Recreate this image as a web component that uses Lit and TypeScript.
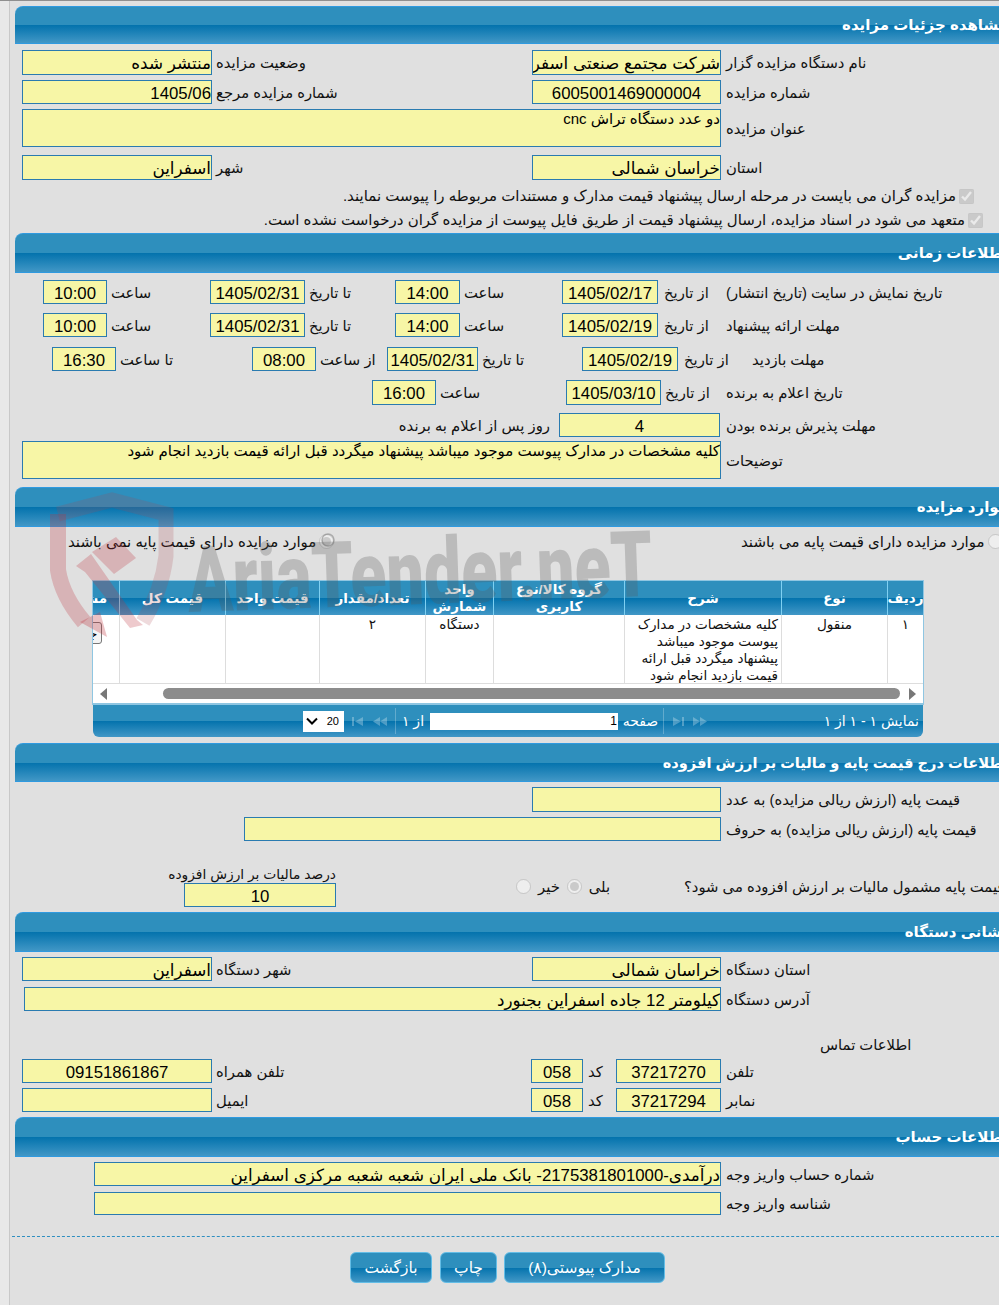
import { LitElement, html, css, svg } from "lit";
import { customElement } from "lit/decorators.js";

const f = (text: string, cls = "") => html`<div class="f ${cls}"><span>${text}</span></div>`;
const l = (text: string, cls = "") => html`<div class="l ${cls}"><span>${text}</span></div>`;

const head = ["ردیف", "نوع", "شرح", "گروه کالا/نوع کاربری", "واحد شمارش", "تعداد/مقدار", "قیمت واحد", "قیمت کل", "مشخصات"];

@customElement("app-root")
export class AppRoot extends LitElement {
  static styles = css`
    :host {
      display: block;
      position: relative;
      width: 999px;
      height: 1305px;
      overflow: hidden;
      background: linear-gradient(90deg, #e8e8e8 9px, #c8c8c8 9px, #c8c8c8 10px, #e0e0e0 10px);
      border-top: 1px solid #8f8f8f;
      box-sizing: border-box;
      font-family: "Liberation Sans", "DejaVu Sans", sans-serif;
      font-size: 14.8px;
      color: #111;
    }
    .sec {
      display: flex;
      align-items: center;
      justify-content: flex-end;
      margin: 0 -20px 0 15px;
      height: 40px;
      box-sizing: border-box;
      padding-right: 11px;
      border-top: 1px solid #2f9ae0;
      border-bottom: 1px solid #2f9ae0;
      border-radius: 8px 0 0 0;
      background: linear-gradient(#2e8fbd 0, #2e8fbd 50%, #0473ad 51%, #4197c6 100%);
      color: #fff;
      font-weight: bold;
      font-size: 15px;
      white-space: nowrap;
    }
    .sec span { direction: rtl; }
    .first { margin-top: 5px; height: 38px; }
    .h39 { height: 39px; }
    .long { font-size: 14.6px; }
    .row {
      display: grid;
      align-items: center;
      height: 24px;
    }
    .mt1 { margin-top: 1px; } .mt4 { margin-top: 4px; } .mt5 { margin-top: 5px; } .mt6 { margin-top: 6px; } .mt7 { margin-top: 7px; }
    .mt8 { margin-top: 8px; } .mt9 { margin-top: 9px; } .mt10 { margin-top: 10px; }
    .h25 { height: 25px; } .h38 { height: 38px; } .h23 { height: 23px; }
    .two { padding-left: 22px; grid-template-columns: 190px 320px 189px 1fr; }
    .wide { padding-left: 22px; grid-template-columns: 699px 1fr; }
    .words { padding-left: 244px; grid-template-columns: 477px 1fr; }
    .f {
      height: 100%;
      box-sizing: border-box;
      border: 1px solid #2a7bb0;
      background: #f7f6a6;
      overflow: hidden;
      direction: rtl;
      white-space: nowrap;
      font-size: 16.8px;
      line-height: 25px;
      text-align: right;
      color: #000;
    }
    .c { text-align: center; }
    .top { line-height: 18px; white-space: normal; font-size: 15px; }
    .l { padding-left: 5px; white-space: nowrap; min-width: 0; }
    .l span { display: inline-block; direction: rtl; white-space: nowrap; }
    .l.n { padding-left: 4px; }
    .l.w { padding-left: 6px; }
    .l.z { padding-left: 0; }
    .chk {
      display: flex;
      justify-content: flex-end;
      align-items: center;
      gap: 3px;
      height: 24px;
      font-size: 15px;
    }
    .chk span { direction: rtl; white-space: nowrap; }
    .pr25 { padding-right: 25px; }
    .pr16 { padding-right: 16px; }
    input { margin: 0; width: 15px; height: 15px; flex: none; }
    .t1 { padding-left: 43px; grid-template-columns: 64px 103px 95px 90px 65px 102px 96px 68px 1fr; }
    .t3 { padding-left: 52px; grid-template-columns: 64px 136px 64px 71px 91px 104px 96px 74px 1fr; }
    .t4 { padding-left: 372px; grid-template-columns: 64px 130px 95px 65px 1fr; }
    .t5 { padding-left: 398px; grid-template-columns: 161px 161px 1fr; }
    .t5 > .f { grid-column: 2; }
    .t5 > .before { grid-column: 1; grid-row: 1; display: flex; justify-content: flex-end; padding: 0 9px 0 0; }
    .t5 > .after { grid-column: 3; grid-row: 1; padding-left: 6px; }
    .radios {
      display: grid;
      grid-template-columns: 673px 1fr;
      padding-left: 68px;
      height: 29px;
      align-items: center;
      font-size: 15px;
    }
    .rd { display: flex; align-items: center; gap: 3px; white-space: nowrap; }
    .rd span { direction: rtl; }
    .grid {
      margin: 24px 0 0 92px;
      width: 832px;
      box-sizing: border-box;
      border: 1px solid #8fc6e2;
      border-bottom: 2px solid #8fc6e2;
      background: #fff;
      overflow: hidden;
    }
    .cols {
      display: grid;
      direction: rtl;
      grid-template-columns: 36px 106px 157px 131px 68px 106px 94px 106px 27px;
    }
    .th {
      height: 34px;
      box-sizing: border-box;
      display: flex;
      align-items: center;
      justify-content: center;
      text-align: center;
      line-height: 17px;
      color: #fff;
      font-weight: bold;
      font-size: 13.5px;
      border-left: 1px solid #7fd0f2;
      background: linear-gradient(#2e8fbd 0, #2e8fbd 50%, #0473ad 51%, #4197c6 100%);
      overflow: hidden;
      white-space: nowrap;
    }
    .th.wrap { white-space: normal; padding: 0 6px; }
    .th.clip { justify-content: flex-start; padding-right: 12px; border-left: 0; }
    .td {
      height: 69px;
      box-sizing: border-box;
      border-left: 1px solid #ddd;
      border-bottom: 1px solid #ddd;
      background: #fff;
      text-align: center;
      padding-top: 1px;
      font-size: 13.6px;
      line-height: 17px;
      overflow: hidden;
    }
    .td.desc { text-align: right; padding: 1px 3px 0 3px; }
    .td.btn { border-left: 0; padding: 7px 17px 0 0; }
    .td.btn button {
      display: block;
      height: 22px;
      width: 50px;
      padding: 0 3px;
      background: #f4f4f4;
      border: 1px solid #767676;
      border-radius: 3px;
      font: inherit;
      white-space: nowrap;
      direction: rtl;
    }
    .scroll {
      display: flex;
      align-items: center;
      height: 19px;
      padding: 0 7px;
      gap: 6px;
    }
    .thumb { flex: 1; height: 11px; margin: 0 3px 0 50px; background: #8c8c8c; border-radius: 6px; }
    .tri { width: 0; height: 0; border-top: 6px solid transparent; border-bottom: 6px solid transparent; }
    .tl { border-right: 7px solid #777; }
    .tr { border-left: 7px solid #777; }
    .pager {
      display: grid;
      grid-template-columns: 1fr auto;
      margin: 0 0 0 93px;
      width: 830px;
      height: 32px;
      border-radius: 0 0 6px 6px;
      background: linear-gradient(#2e8fbd 0, #2e8fbd 50%, #0473ad 51%, #4197c6 100%);
      color: #fff;
      align-items: center;
      font-size: 14px;
    }
    .pg { display: flex; align-items: center; padding-left: 210px; }
    .sel {
      display: flex;
      align-items: center;
      justify-content: space-between;
      box-sizing: border-box;
      width: 41px;
      height: 21px;
      padding: 0 5px 0 3px;
      background: #fff;
      color: #000;
      font-size: 11px;
    }
    .nav { display: flex; gap: 9px; align-items: center; margin: 0 0 0 8px; }
    .nav svg { display: block; }
    .sep { width: 1px; height: 26px; background: rgba(255, 255, 255, 0.25); flex: none; }
    .ml8 { margin-left: 8px; }
    .of { direction: rtl; width: 34px; text-align: center; }
    .pi {
      width: 188px;
      height: 17px;
      box-sizing: border-box;
      background: #fff;
      color: #000;
      text-align: right;
      font-size: 12px;
      line-height: 17px;
      padding-right: 1px;
    }
    .pw { direction: rtl; width: 45px; text-align: center; }
    .info { direction: rtl; padding-right: 4px; }
    .tax { grid-template-columns: 152px 180px 168px 1fr; padding-left: 184px; height: 41px; margin-top: 25px; align-items: end; }
    .taxb { display: flex; flex-direction: column; height: 41px; }
    .taxb .cap { height: 17px; line-height: 17px; display: flex; justify-content: flex-end; white-space: nowrap; font-size: 13.8px; }
    .taxb .cap span { direction: rtl; }
    .taxb .f { flex: 1; height: 24px; }
    .yn { display: flex; align-items: center; align-self: center; gap: 7px; white-space: nowrap; }
    .yn span { direction: rtl; }
    .q { align-self: center; display: flex; align-items: center; white-space: nowrap; }
    .q span { direction: rtl; }
    .addr { padding-left: 24px; grid-template-columns: 697px 1fr; }
    .contact { height: 48px; box-sizing: border-box; padding: 0 0 6px 820px; display: flex; align-items: flex-end; }
    .contact span { direction: rtl; }
    .ph { padding-left: 22px; grid-template-columns: 190px 319px 52px 33px 105px 1fr; }
    .ph .k { padding-left: 5px; }
    .acc { padding-left: 94px; grid-template-columns: 627px 1fr; }
    .dash { margin: 21px 0 0 12px; border-top: 1px dashed #2f8fc0; }
    .btns { display: flex; gap: 7px; padding-left: 350px; margin-top: 15px; }
    .btn-b {
      height: 31px;
      box-sizing: border-box;
      border: 1px solid #63bde6;
      border-radius: 6px;
      background: linear-gradient(#2e8fbd 0, #2e8fbd 50%, #0473ad 51%, #4197c6 100%);
      color: #fff;
      direction: rtl;
      display: flex;
      align-items: center;
      justify-content: center;
      font-size: 15.5px;
    }
    .b1 { width: 82px; margin-right: 1px; } .b2 { width: 57px; } .b3 { width: 161px; }
    .wm { position: absolute; left: 0; top: 479px; width: 700px; height: 170px; pointer-events: none; }
  `;

  private nav(flip: boolean) {
    const c = "rgba(255,255,255,.28)";
    const a = flip ? "scale(-1,1) translate(-12,0)" : "";
    return html`<svg width="12" height="9" viewBox="0 0 12 9"><g transform=${a} fill=${c}><rect x="0" y="0" width="2" height="9"></rect><path d="M11 0V9L3 4.5Z"></path></g></svg>
      <svg width="14" height="9" viewBox="0 0 14 9"><g transform=${flip ? "scale(-1,1) translate(-14,0)" : ""} fill=${c}><path d="M7 0V9L0 4.5Z"></path><path d="M14 0V9L7 4.5Z"></path></g></svg>`;
  }

  render() {
    return html`
      <div class="sec first"><span>مشاهده جزئیات مزایده</span></div>
      <div class="row two h25 mt6">${f("منتشر شده")}${l("وضعیت مزایده", "n")}${f("شرکت مجتمع صنعتی اسفراین")}${l("نام دستگاه مزایده گزار")}</div>
      <div class="row two mt5">${f("1405/06")}${l("شماره مزایده مرجع", "n")}${f("6005001469000004", "c")}${l("شماره مزایده")}</div>
      <div class="row wide h38 mt5">${f("دو عدد دستگاه تراش cnc", "top")}${l("عنوان مزایده")}</div>
      <div class="row two h25 mt8">${f("اسفراین")}${l("شهر", "n")}${f("خراسان شمالی")}${l("استان")}</div>
      <div class="chk mt4 pr25"><span>مزایده گران می بایست در مرحله ارسال پیشنهاد قیمت مدارک و مستندات مربوطه را پیوست نمایند.</span><input type="checkbox" checked disabled /></div>
      <div class="chk pr16"><span>متعهد می شود در اسناد مزایده، ارسال پیشنهاد قیمت از طریق فایل پیوست از مزایده گران درخواست نشده است.</span><input type="checkbox" checked disabled /></div>

      <div class="sec mt1"><span>اطلاعات زمانی</span></div>
      <div class="row t1 mt7">${f("10:00", "c")}${l("ساعت", "n")}${f("1405/02/31", "c")}${l("تا تاریخ", "n")}${f("14:00", "c")}${l("ساعت", "n")}${f("1405/02/17", "c")}${l("از تاریخ", "w")}${l("تاریخ نمایش در سایت (تاریخ انتشار)", "z")}</div>
      <div class="row t1 mt9">${f("10:00", "c")}${l("ساعت", "n")}${f("1405/02/31", "c")}${l("تا تاریخ", "n")}${f("14:00", "c")}${l("ساعت", "n")}${f("1405/02/19", "c")}${l("از تاریخ", "w")}${l("مهلت ارائه پیشنهاد", "z")}</div>
      <div class="row t3 mt10">${f("16:30", "c")}${l("تا ساعت", "n")}${f("08:00", "c")}${l("از ساعت", "n")}${f("1405/02/31", "c")}${l("تا تاریخ", "n")}${f("1405/02/19", "c")}${l("از تاریخ", "w")}${l("مهلت بازدید", "z")}</div>
      <div class="row t4 h25 mt9">${f("16:00", "c")}${l("ساعت", "n")}${f("1405/03/10", "c")}${l("از تاریخ", "n")}${l("تاریخ اعلام به برنده", "z")}</div>
      <div class="row t5 mt8">${l("روز پس از اعلام به برنده", "before")}${f("4", "c")}${l("مهلت پذیرش برنده بودن", "after")}</div>
      <div class="row wide h38 mt4">${f("کلیه مشخصات در مدارک پیوست موجود میباشد پیشنهاد میگردد قبل ارائه قیمت بازدید انجام شود", "top")}${l("توضیحات")}</div>

      <div class="sec mt8"><span>موارد مزایده</span></div>
      <div class="radios">
        <div class="rd"><span>موارد مزایده دارای قیمت پایه نمی باشند</span><input type="radio" name="p" checked disabled /></div>
        <div class="rd"><span>موارد مزایده دارای قیمت پایه می باشند</span><input type="radio" name="p" disabled /></div>
      </div>
      <div class="grid">
        <div class="cols">
          ${head.map((h, i) => html`<div class="th ${i === 3 || i === 4 ? "wrap" : ""} ${i === 8 ? "clip" : ""}">${h}</div>`)}
          <div class="td">۱</div>
          <div class="td">منقول</div>
          <div class="td desc">کلیه مشخصات در مدارک پیوست موجود میباشد پیشنهاد میگردد قبل ارائه قیمت بازدید انجام شود</div>
          <div class="td"></div>
          <div class="td">دستگاه</div>
          <div class="td">۲</div>
          <div class="td"></div>
          <div class="td"></div>
          <div class="td btn"><button>جزئیات</button></div>
        </div>
        <div class="scroll"><div class="tri tl"></div><div class="thumb"></div><div class="tri tr"></div></div>
      </div>
      <div class="pager">
        <div class="pg">
          <div class="sel"><svg width="12" height="8" viewBox="0 0 12 8"><path d="M1 1.5L6 6.5L11 1.5" fill="none" stroke="#000" stroke-width="2"></path></svg><span>20</span></div>
          <div class="nav">${this.nav(false)}</div>
          <div class="sep ml8"></div>
          <div class="of">از ۱</div>
          <div class="pi">1</div>
          <div class="pw">صفحه</div>
          <div class="sep"></div>
          <div class="nav">${this.nav(true)}</div>
        </div>
        <div class="info">نمایش ۱ - ۱ از ۱</div>
      </div>

      <div class="sec h39 long mt6"><span>اطلاعات درج قیمت پایه و مالیات بر ارزش افزوده</span></div>
      <div class="row two h25 mt5"><div></div><div></div>${f("")}${l("قیمت پایه (ارزش ریالی مزایده) به عدد")}</div>
      <div class="row words mt5">${f("")}${l("قیمت پایه (ارزش ریالی مزایده) به حروف")}</div>
      <div class="row tax">
        <div class="taxb"><div class="cap"><span>درصد مالیات بر ارزش افزوده</span></div>${f("10", "c")}</div>
        <div></div>
        <div class="yn"><input type="radio" name="t" disabled /><span>خیر</span><input type="radio" name="t" checked disabled /><span>بلی</span></div>
        <div class="q"><span>قیمت پایه مشمول مالیات بر ارزش افزوده می شود؟</span></div>
      </div>

      <div class="sec mt5"><span>نشانی دستگاه</span></div>
      <div class="row two mt5">${f("اسفراین")}${l("شهر دستگاه", "n")}${f("خراسان شمالی")}${l("استان دستگاه")}</div>
      <div class="row addr mt6">${f("کیلومتر 12 جاده اسفراین بجنورد")}${l("آدرس دستگاه")}</div>
      <div class="contact"><span>اطلاعات تماس</span></div>
      <div class="row ph">${f("09151861867", "c")}${l("تلفن همراه", "n")}${f("058", "c")}${l("کد", "k")}${f("37217270", "c")}${l("تلفن")}</div>
      <div class="row ph mt5">${f("")}${l("ایمیل", "n")}${f("058", "c")}${l("کد", "k")}${f("37217294", "c")}${l("نمابر")}</div>

      <div class="sec mt5"><span>اطلاعات حساب</span></div>
      <div class="row acc mt5">${f("درآمدی-2175381801000- بانک ملی ایران شعبه شعبه مرکزی اسفراین")}${l("شماره حساب واریز وجه")}</div>
      <div class="row acc h23 mt6">${f("")}${l("شناسه واریز وجه")}</div>
      <div class="dash"></div>
      <div class="btns"><div class="btn-b b1">بازگشت</div><div class="btn-b b2">چاپ</div><div class="btn-b b3">مدارک پیوستی(۸)</div></div>

      <svg class="wm" viewBox="0 480 700 170" aria-hidden="true">
        ${svg`
          <path d="M58 514L112 500L166 514V556Q162 590 143 622" fill="none" stroke="rgba(170,70,80,.2)" stroke-width="15"></path>
          <path d="M58 514V570Q62 596 84 622" fill="none" stroke="rgba(190,50,60,.26)" stroke-width="16"></path>
          <path d="M76 566L91 554L137 620L143 625L130 628L85 572Z" fill="rgba(190,50,60,.26)"></path>
          <path d="M92 552L116 537L136 558L114 574Z" fill="rgba(190,50,60,.26)"></path>
          <path d="M80 622L100 612L107 637Z" fill="rgba(190,50,60,.3)"></path>
          <g transform="rotate(-2 420 590)">
            <text x="188" y="604" textLength="465" lengthAdjust="spacingAndGlyphs" font-family="Roboto, sans-serif" font-weight="900" font-size="92" fill="rgba(90,90,90,.27)">AriaTender.neT</text>
          </g>
          <circle cx="328" cy="540" r="6" fill="none" stroke="rgba(120,120,120,.5)" stroke-width="1.5"></circle>
        `}
      </svg>
    `;
  }
}
